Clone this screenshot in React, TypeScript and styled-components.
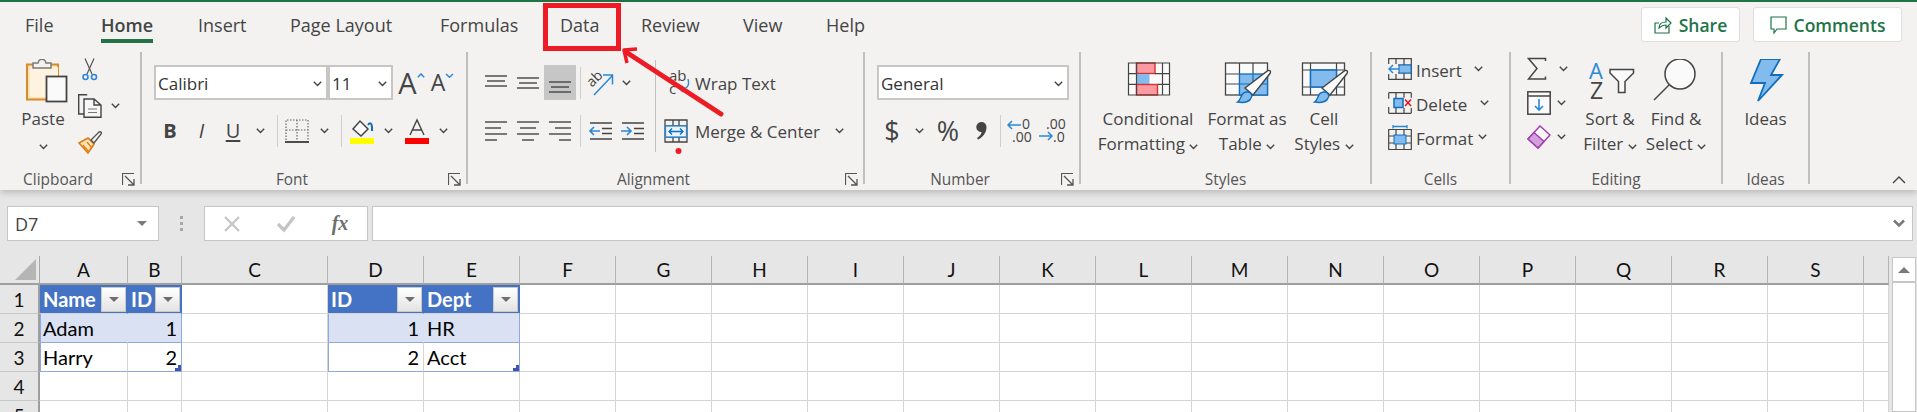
import React from 'react'
import styled, { createGlobalStyle } from 'styled-components'

const Global = createGlobalStyle`
html, body { margin: 0; padding: 0; background: #e6e6e6; overflow: hidden; }
* { box-sizing: border-box; }
`

const UI = `"Open Sans", "Noto Sans", sans-serif`
const INK = '#444444'
const BLUE = '#2b88d8'
const DARK_BLUE = '#106ebe'
const SOFT_BLUE = '#83bbec'

const Page = styled.div`
position: relative;
width: 1917px;
height: 412px;
overflow: hidden;
background: #e6e6e6;
display: flex;
flex-direction: column;
font-family: ${UI};
color: #444;
`
const Head = styled.div`
background: #f3f2f1;
border-top: 2px solid #217346;
box-shadow: 0 2px 7px rgba(0, 0, 0, 0.22);
position: relative;
`
const TabRow = styled.div`
height: 50px;
display: flex;
padding-left: 25px;
`
const Tab = styled.div<{ $w: number }>`
width: ${({ $w }) => $w}px;
padding-top: 12px;
`
const TabLabel = styled.span<{ $active?: boolean }>`
display: inline-block;
font-size: 18px;
line-height: 22px;
height: 29px;
color: #444;
font-weight: ${({ $active }) => ($active ? 600 : 400)};
border-bottom: ${({ $active }) => ($active ? '4px solid #217346' : '0')};
padding-bottom: 3px;
`
const HeadActions = styled.div`
margin-left: auto;
display: flex;
gap: 13px;
padding: 5px 15px 0 0;
`
const ActionButton = styled.div<{ $w: number }>`
width: ${({ $w }) => $w}px;
height: 35px;
background: #fff;
border: 1px solid #e1dfdd;
border-radius: 3px;
display: flex;
align-items: center;
justify-content: center;
gap: 7px;
color: #217346;
font-weight: 600;
font-size: 17.5px;
`
const Ribbon = styled.div`
height: 138px;
display: flex;
`
const Group = styled.section<{ $w: number }>`
width: ${({ $w }) => $w}px;
height: 132px;
border-right: 2px solid #c0bfbe;
display: flex;
flex-direction: column;
`
const GroupBody = styled.div<{ $pad?: number }>`
flex: 1;
min-height: 0;
display: flex;
padding-left: ${({ $pad }) => $pad ?? 0}px;
`
const GroupFoot = styled.div`
height: 22px;
margin-bottom: -6px;
display: flex;
align-items: center;
`
const GroupLabel = styled.div`
flex: 1;
text-align: center;
font-size: 15.400px;
color: #555;
`
const Launcher = styled.div`
width: 24px;
display: flex;
justify-content: center;
`
const Stack = styled.div`
display: flex;
flex-direction: column;
padding-top: 13px;
gap: 13px;
`
const ToolRow = styled.div`
height: 35px;
display: flex;
align-items: center;
`
const Slot = styled.div<{ $w: number; $active?: boolean }>`
width: ${({ $w }) => $w}px;
height: 35px;
flex: none;
display: flex;
align-items: center;
justify-content: center;
background: ${({ $active }) => ($active ? '#c6c6c6' : 'transparent')};
color: #444;
`
const Rule = styled.div<{ $mx: number }>`
width: 1px;
height: 32px;
flex: none;
margin: 0 ${({ $mx }) => $mx}px;
background: #cfcecd;
`
const TallRule = styled.div`
width: 1px;
height: 92px;
margin-top: 8px;
flex: none;
background: #c0bfbe;
`
const Combo = styled.div<{ $w: number }>`
width: ${({ $w }) => $w}px;
height: 35px;
background: #fff;
border: 2px solid #c8c6c4;
display: flex;
align-items: center;
justify-content: space-between;
padding: 2px 4px 0 2px;
font-size: 17px;
color: #333;
`
const BoldMark = styled.span`
font-weight: 700;
font-size: 20px;
`
const ItalicMark = styled.span`
font-style: italic;
font-size: 20px;
`
const UnderMark = styled.span`
font-size: 20px;
text-decoration: underline;
text-underline-offset: 2px;
`
const SymbolMark = styled.span<{ $size: number }>`
font-size: ${({ $size }) => $size}px;
line-height: 1;
color: #444;
`
const GrowMark = styled.span<{ $size: number }>`
font-size: ${({ $size }) => $size}px;
line-height: 1;
color: #444;
`
const LineButton = styled.div`
display: flex;
align-items: center;
height: 35px;
`
const LineIcon = styled.div<{ $w: number; $pr: number }>`
width: ${({ $w }) => $w}px;
padding-right: ${({ $pr }) => $pr}px;
flex: none;
display: flex;
justify-content: flex-end;
`
const LineText = styled.div<{ $w?: number; $ml?: number }>`
width: ${({ $w }) => ($w ? `${$w}px` : 'auto')};
margin-left: ${({ $ml }) => $ml ?? 0}px;
padding-top: 2px;
flex: none;
font-size: 17px;
color: #444;
white-space: nowrap;
`
const BigButton = styled.div<{ $w: number }>`
width: ${({ $w }) => $w}px;
flex: none;
padding-top: 7px;
display: flex;
flex-direction: column;
align-items: center;
`
const BigText = styled.div`
font-size: 17px;
line-height: 24.500px;
height: 24.500px;
white-space: nowrap;
color: #444;
`
const ToolColumn = styled.div<{ $top: number; $gap: number; $ml?: number; $w?: number }>`
display: flex;
flex-direction: column;
padding-top: ${({ $top }) => $top}px;
gap: ${({ $gap }) => $gap}px;
margin-left: ${({ $ml }) => $ml ?? 0}px;
width: ${({ $w }) => ($w ? `${$w}px` : 'auto')};
flex: none;
`
const ToolLine = styled.div<{ $h: number }>`
height: ${({ $h }) => $h}px;
display: flex;
align-items: center;
`
const ChevGap = styled.span<{ $ml: number }>`
display: inline-flex;
margin-left: ${({ $ml }) => $ml}px;
`
const Collapse = styled.div`
position: absolute;
right: 11px;
bottom: 6px;
display: flex;
`
const FormulaRow = styled.div`
height: 66px;
padding: 16px 4px 0 7px;
display: flex;
flex: none;
`
const NameBox = styled.div`
width: 152px;
height: 35px;
background: #fff;
border: 1px solid #c6c6c6;
display: flex;
align-items: center;
justify-content: space-between;
padding: 0 11px 0 7px;
font-size: 18px;
color: #444;
`
const GripDots = styled.div`
width: 45px;
display: flex;
flex-direction: column;
align-items: center;
justify-content: center;
height: 35px;
gap: 3px;
i {
  width: 3px;
  height: 3px;
  background: #a6a6a6;
  display: block;
}
`
const FxBox = styled.div`
width: 164px;
height: 35px;
background: #fff;
border: 1px solid #c6c6c6;
display: flex;
align-items: center;
margin-right: 4px;
`
const FxSlot = styled.div`
width: 54px;
display: flex;
justify-content: center;
`
const FxMark = styled.span`
font-family: "Liberation Serif", serif;
font-style: italic;
font-weight: 700;
font-size: 20px;
color: #6e6e6e;
`
const FormulaInput = styled.div`
flex: 1;
height: 35px;
background: #fff;
border: 1px solid #c6c6c6;
display: flex;
align-items: center;
justify-content: flex-end;
padding-right: 7px;
`
const SheetRow = styled.div`
display: flex;
flex: 1;
min-height: 0;
`
const Grid = styled.div`
width: 1889px;
height: 175px;
display: grid;
grid-template-columns: 40px 88px 54px 146px 96px 96px repeat(14, 96px) 25px;
grid-template-rows: 29px repeat(5, 29px);
font-family: Lato, "Open Sans", sans-serif;
font-size: 20px;
color: #111;
background: #fff;
border-right: 1px solid #9a9a9a;
`
const Corner = styled.div`
background: #e6e6e6;
border-right: 1px solid #a8a8a8;
border-bottom: 2px solid #9f9f9f;
display: flex;
align-items: flex-end;
justify-content: flex-end;
padding: 0 3px 3px 0;
&::after {
  content: '';
  border-style: solid;
  border-width: 0 0 21px 21px;
  border-color: transparent transparent #b5b5b5 transparent;
}
`
const ColHead = styled.div`
background: #e6e6e6;
border-right: 1px solid #b4b4b4;
border-bottom: 2px solid #9f9f9f;
display: flex;
align-items: center;
justify-content: center;
font-size: 19px;
`
const RowHead = styled.div`
background: #e6e6e6;
border-right: 2px solid #9f9f9f;
border-bottom: 1px solid #c8c8c8;
display: flex;
align-items: center;
justify-content: center;
font-size: 19px;
`
type CellKind = 'plain' | 'head' | 'band' | 'last'
const CELL_BG: Record<CellKind, string> = { plain: '#fff', head: '#4472c4', band: '#d9e1f2', last: '#fff' }
const Cell = styled.div<{ $kind: CellKind; $right?: boolean; $edgeL?: boolean; $edgeR?: boolean; $end?: boolean }>`
position: relative;
background: ${({ $kind }) => CELL_BG[$kind]};
color: ${({ $kind }) => ($kind === 'head' ? '#fff' : '#000')};
font-weight: ${({ $kind }) => ($kind === 'head' ? 700 : 400)};
border-bottom: 1px solid ${({ $kind }) => ($kind === 'band' || $kind === 'last' ? '#8ea9db' : '#d4d4d4')};
border-right: 1px solid ${({ $kind, $edgeR }) =>
  $edgeR ? '#8ea9db' : $kind === 'head' ? '#4472c4' : $kind === 'band' ? '#d9e1f2' : '#d4d4d4'};
box-shadow: ${({ $edgeL }) => ($edgeL ? 'inset 1px 0 0 #8ea9db' : 'none')};
display: flex;
align-items: center;
justify-content: ${({ $right }) => ($right ? 'flex-end' : 'space-between')};
padding: 0 ${({ $kind }) => ($kind === 'head' ? 0 : 4)}px 0 3px;
${({ $end }) =>
  $end
    ? `&::after {
  content: '';
  position: absolute;
  right: 0;
  bottom: 0;
  width: 6px;
  height: 6px;
  background: #4054b2;
  clip-path: polygon(100% 0, 100% 100%, 0 100%, 0 50%, 50% 50%, 50% 0);
}`
    : ''}
`
const FilterButton = styled.div`
width: 25px;
height: 25px;
background: linear-gradient(#ffffff, #e3e3e3);
border: 1px solid #c9c9c9;
display: flex;
align-items: center;
justify-content: center;
flex: none;
margin-right: 1px;
&::after {
  content: '';
  border-style: solid;
  border-width: 5px 5px 0 5px;
  border-color: #6e6e6e transparent transparent transparent;
}
`
const TriDown = styled.span`
border-style: solid;
border-width: 5px 5px 0 5px;
border-color: #7a7a7a transparent transparent transparent;
`
const ScrollBar = styled.div`
width: 24px;
margin-left: 3px;
margin-top: 1px;
background: #fff;
border: 1px solid #c6c6c6;
`
const ScrollUp = styled.div`
height: 25px;
border-bottom: 2px solid #c6c6c6;
display: flex;
align-items: center;
justify-content: center;
&::after {
  content: '';
  border-style: solid;
  border-width: 0 6px 6px 6px;
  border-color: transparent transparent #7a7a7a transparent;
}
`
const Annotation = styled.svg`
position: absolute;
left: 0;
top: 0;
pointer-events: none;
`

const Chev = ({ w = 9, c = INK }: { w?: number; c?: string }) => (
  <svg width={w} height={6} viewBox="0 0 9 6" fill="none">
    <path d="M.8.8 4.500 4.500 8.200.8" stroke={c} strokeWidth="1.400" />
  </svg>
)

const LaunchIcon = () => (
  <svg width={13} height={13} viewBox="0 0 13 13" fill="none" stroke="#555">
    <path d="M.5 12V.5H12" strokeWidth="1.200" />
    <path d="M3 3l8.500 8.500M6 12h6V6" strokeWidth="1.300" />
  </svg>
)

const PasteIcon = () => (
  <svg width={50} height={48} viewBox="0 1 50 48">
    <rect x="9" y="6.500" width="31" height="35" fill="#fbe4b8" stroke="#d98a2a" strokeWidth="2" />
    <rect x="12" y="9" width="28" height="30" fill="#fdf3df" />
    <path d="M15 10V5h5c1-5 7-5 8 0h5v5z" fill="#f3f2f1" stroke="#7a7a7a" strokeWidth="1.500" />
    <rect x="28.500" y="18.500" width="20" height="25" fill="#fafafa" stroke="#444" strokeWidth="1.800" />
  </svg>
)
const CutIcon = () => (
  <svg width={24} height={24} viewBox="0 0 24 24" fill="none">
    <path d="M7 .5 14 16M16 .5 9 16" stroke="#555" strokeWidth="1.200" />
    <circle cx="7.500" cy="19" r="2.500" stroke={BLUE} strokeWidth="1.600" />
    <circle cx="16" cy="19" r="2.500" stroke={BLUE} strokeWidth="1.600" />
  </svg>
)
const CopyIcon = () => (
  <svg width={24} height={24} viewBox="0 0 24 24" fill="none" stroke="#444" strokeWidth="1.400">
    <path d="M6 20H.7V.7h8.500" />
    <path d="M6 5h10l7 6v12.300H6zM16 5v6h7" fill="#f7f7f7" />
    <path d="M10 15h9M10 18.500h9" stroke="#777" strokeWidth="1.200" />
  </svg>
)
const PainterIcon = () => (
  <svg width={24} height={24} viewBox="0 0 24 24" fill="none">
    <path d="M1 13 10 8l6 6-6 9z" fill="#fbe4b8" stroke="#e07b12" strokeWidth="1.600" />
    <path d="M5 15l6 7M9 12l5 6" stroke="#e07b12" strokeWidth="1.200" />
    <path d="M13 10 21 2c2-1 3 1 2 2l-7 9z" fill="#f7f7f7" stroke="#555" strokeWidth="1.400" />
  </svg>
)
const BorderIcon = () => (
  <svg width={24} height={24} viewBox="0 0 24 24" fill="none">
    <path d="M1 21V1h22v20M12 1v20M1 11h22" stroke="#666" strokeWidth="1.200" strokeDasharray="1.500 1.500" />
    <path d="M0 23h24" stroke="#222" strokeWidth="1.600" />
  </svg>
)
const FillIcon = () => (
  <svg width={26} height={26} viewBox="0 0 26 26" fill="none">
    <path d="M4 11 11 3l8 8-7 7z" fill="#fafafa" stroke="#444" strokeWidth="1.500" />
    <path d="M19 7c2-3 4-2 4 3v3" stroke={DARK_BLUE} strokeWidth="2" />
    <rect x="1" y="20" width="24" height="6" fill="#ffff00" />
  </svg>
)
const FontColorIcon = () => (
  <svg width={26} height={26} viewBox="0 0 26 26" fill="none">
    <path d="M6 17 13 2l7 15M8.500 12h9" stroke="#444" strokeWidth="1.400" />
    <rect x="1" y="20" width="24" height="6" fill="#ff0000" />
  </svg>
)
const Lines = ({ ys, widths }: { ys: number[]; widths: [number, number][] }) => (
  <svg width={24} height={24} viewBox="0 0 24 24" fill="none" stroke="#444" strokeWidth="1.400">
    {ys.map((y, i) => (
      <path key={y} d={`M${widths[i][0]} ${y}H${widths[i][1]}`} />
    ))}
  </svg>
)
const OrientIcon = () => (
  <svg width={28} height={26} viewBox="0 0 28 26" fill="none" overflow="visible">
    <text x="0" y="14" fontSize="14" fill="#444" fontFamily="Open Sans" transform="rotate(-45 7 10)">ab</text>
    <path d="M7 25 25 6M16 5h9.500v9.500" stroke={BLUE} strokeWidth="1.500" />
  </svg>
)
const IndentIcon = ({ inward }: { inward?: boolean }) => (
  <svg width={24} height={24} viewBox="0 0 24 24" fill="none">
    <path d="M1 4h22M13 9.500h10M13 14.500h10M1 20h22" stroke="#444" strokeWidth="1.300" />
    {inward ? (
      <path d="M0 12h10M6 8l4 4-4 4" stroke={BLUE} strokeWidth="1.600" />
    ) : (
      <path d="M11 12H1M5 8l-4 4 4 4" stroke={BLUE} strokeWidth="1.600" />
    )}
  </svg>
)
const WrapIcon = () => (
  <svg width={24} height={26} viewBox="0 0 24 26" fill="none" overflow="visible">
    <text x="3" y="11" fontSize="15" fill="#444" fontFamily="Open Sans">ab</text>
    <text x="3" y="24" fontSize="15" fill="#444" fontFamily="Open Sans">c</text>
    <path d="M22 9c2 7-1 10-8 10M17 16l-3 3 3 3" stroke={BLUE} strokeWidth="1.400" />
  </svg>
)
const MergeIcon = () => (
  <svg width={24} height={24} viewBox="0 0 24 24" fill="none">
    <path d="M1 1h22v22H1zM1 7h22M1 18h22M9 1v6M15 1v6M9 18v5M15 18v5" stroke="#444" strokeWidth="1.300" />
    <rect x="1.500" y="7" width="21" height="11" fill="#e9f3fb" stroke={BLUE} strokeWidth="1.300" />
    <path d="M5 12.500h14M8 9.500l-3 3 3 3M16 9.500l3 3-3 3" stroke={DARK_BLUE} strokeWidth="1.300" />
  </svg>
)
const CommaIcon = () => (
  <svg width={14} height={20} viewBox="0 0 14 20" fill="#444">
    <path d="M7 1a5 5 0 0 1 5.500 5c0 6-4 10.500-8.500 12.500L3 17c3-2 4.500-4 4.500-6A5 5 0 1 1 7 1z" />
  </svg>
)
const DecimalIcon = ({ more }: { more?: boolean }) => (
  <svg width={26} height={26} viewBox="0 0 26 26" fill="none" overflow="visible">
    <text x={more ? 15 : 7} y="11" fontSize="14" fill="#444" fontFamily="Open Sans">{more ? '0' : '.00'}</text>
    <text x={more ? 5 : 14} y="24" fontSize="14" fill="#444" fontFamily="Open Sans">{more ? '.00' : '.0'}</text>
    {more ? (
      <path d="M14 7H1M5 3 1 7l4 4" stroke={BLUE} strokeWidth="1.500" />
    ) : (
      <path d="M0 18h13M9 14l4 4-4 4" stroke={BLUE} strokeWidth="1.500" />
    )}
  </svg>
)
const ConditionalIcon = () => (
  <svg width={50} height={48} viewBox="1123 59 50 48" fill="none">
    <rect x="1128.500" y="63" width="41" height="32" fill="#fafafa" />
    <rect x="1136.500" y="63" width="18.500" height="10.500" fill="#fb9aa2" stroke="#d9312b" strokeWidth="1.400" />
    <rect x="1136.500" y="74" width="13" height="10" fill={SOFT_BLUE} />
    <rect x="1136.500" y="84.500" width="21" height="10.500" fill="#fb9aa2" stroke="#d9312b" strokeWidth="1.400" />
    <path d="M1128.500 63h41v32h-41zM1128.500 73.700h8M1128.500 84.300h8M1155 73.700h14.500M1158 84.300h11.500M1162.500 63v32M1136.500 63v32" stroke="#444" strokeWidth="1.200" />
  </svg>
)
const Brush = () => (
  <g>
    <path d="M25 30 48 12.500c2.500-.5 3 1 2 3L33 37z" fill="#fafafa" stroke="#444" strokeWidth="1.400" />
    <path d="M32 38 30.500 41c-2 3-7 4-13 3 3-2 3-5 5-8 2-2.500 6-2.500 8-1z" fill={SOFT_BLUE} stroke={DARK_BLUE} strokeWidth="1.400" />
  </g>
)
const TableStyleIcon = () => (
  <svg width={54} height={48} viewBox="0 1 54 48" fill="none">
    <rect x="5.500" y="5" width="42" height="32" fill="#fafafa" stroke="#444" strokeWidth="1.300" />
    <path d="M5.500 16h14M5.500 26h14M19.500 5v32M33 5v11" stroke="#444" strokeWidth="1.200" />
    <rect x="19.500" y="16" width="28" height="21" fill={SOFT_BLUE} stroke={DARK_BLUE} strokeWidth="1.300" />
    <path d="M19.500 26h28M33 16v21" stroke={DARK_BLUE} strokeWidth="1.200" />
    <Brush />
  </svg>
)
const CellStyleIcon = () => (
  <svg width={54} height={48} viewBox="0 1 54 48" fill="none">
    <rect x="5.500" y="5" width="42" height="32" fill="#fafafa" stroke="#444" strokeWidth="1.300" />
    <path d="M13.500 5v32M39.500 5v32M5.500 12h42M5.500 29h42" stroke="#444" strokeWidth="1.200" />
    <rect x="13.500" y="12" width="26" height="17" fill={SOFT_BLUE} stroke={DARK_BLUE} strokeWidth="1.500" />
    <Brush />
  </svg>
)
const InsertIcon = () => (
  <svg width={24} height={22} viewBox="0 0 24 22" fill="none">
    <path d="M.7.7h22.600v20.600H.7zM.7 7h22.600M.7 15h22.600M8 .7v20.600M16 .7v20.600" stroke="#444" strokeWidth="1.200" />
    <rect x="11" y="7" width="12" height="8" fill={SOFT_BLUE} stroke={DARK_BLUE} />
    <rect x="0" y="6" width="10" height="10" fill="#f3f2f1" />
    <path d="M11 11H1M5 7l-4 4 4 4" stroke={BLUE} strokeWidth="1.500" />
  </svg>
)
const DeleteIcon = () => (
  <svg width={24} height={22} viewBox="0 0 24 22" fill="none">
    <path d="M.7.7h22.600M.7 21.300h22.600M.7.7v6M.7 15v6.300M8 .7v20.600M16 .7v5M16 16v5M23.300.7v5M23.300 16v5" stroke="#444" strokeWidth="1.200" />
    <rect x="6" y="6.500" width="9" height="9" fill={SOFT_BLUE} stroke={DARK_BLUE} strokeWidth="1.500" />
    <path d="M17 7.500l6 6.500M23 7.500l-6 6.500" stroke="#e81123" strokeWidth="1.500" />
  </svg>
)
const FormatIcon = () => (
  <svg width={24} height={25} viewBox="0 0 24 25" fill="none">
    <path d="M.7 4.500h22.600v20H.7zM.7 11h22.600M.7 18h22.600M8 4.500v20M16 4.500v20" stroke="#444" strokeWidth="1.200" />
    <rect x="6" y="10" width="12" height="9" fill={SOFT_BLUE} stroke={DARK_BLUE} />
    <path d="M5 1.500h14M5 0v3.500M19 0v3.500" stroke={BLUE} strokeWidth="1.300" />
  </svg>
)
const SigmaIcon = () => (
  <svg width={20} height={24} viewBox="0 0 20 24" fill="none">
    <path d="M18.500 4V1.500H1.500L10 11.500 1.500 22H18.500V19.500" stroke="#444" strokeWidth="1.500" />
  </svg>
)
const FillDownIcon = () => (
  <svg width={24} height={24} viewBox="0 0 24 24" fill="none">
    <rect x=".8" y=".8" width="22.400" height="22.400" fill="#fafafa" stroke="#444" strokeWidth="1.500" />
    <path d="M1 5h22" stroke="#444" strokeWidth="1.500" />
    <path d="M12 8v11M8 15l4 4 4-4" stroke={BLUE} strokeWidth="1.600" />
  </svg>
)
const EraserIcon = () => (
  <svg width={24} height={24} viewBox="0 0 24 24" fill="none">
    <path d="M1 14 13 1l10 9-12 13z" fill="#fafafa" stroke="#a03fae" strokeWidth="1.500" />
    <path d="M1 14 7 7.500l10 9L11 23z" fill="#d59fdc" stroke="#a03fae" strokeWidth="1.500" />
  </svg>
)
const SortIcon = () => (
  <svg width={50} height={48} viewBox="0 1 50 48" fill="none" overflow="visible">
    <text x="4" y="21" fontSize="22" fill={BLUE} fontFamily="Open Sans">A</text>
    <text x="5" y="41" fontSize="23" fill="#444" fontFamily="Open Sans">Z</text>
    <path d="M25 11.500h23.500v3.500L40 23.500v11h-6.500v-11L25 15z" fill="#fafafa" stroke="#444" strokeWidth="1.500" />
  </svg>
)
const FindIcon = () => (
  <svg width={60} height={48} viewBox="0 1 60 48" fill="none">
    <circle cx="34" cy="16" r="15" fill="#fafafa" stroke="#444" strokeWidth="1.500" />
    <path d="M23 27 8 42" stroke="#444" strokeWidth="1.500" />
  </svg>
)
const BoltIcon = () => (
  <svg width={40} height={48} viewBox="0 1 40 48" fill="none">
    <path d="M15 1h19L25 17h11L12 43l7-18H5z" fill={SOFT_BLUE} stroke={DARK_BLUE} strokeWidth="1.800" />
  </svg>
)
const ShareIcon = () => (
  <svg width={18} height={18} viewBox="0 0 18 18" fill="none" stroke="#217346" strokeWidth="1.200">
    <path d="M15 10v7H1V7h4" />
    <path d="M5 12c0-4 3-6 7-6V2l5 5-5 5V9c-3 0-5 1-7 3z" />
  </svg>
)
const CommentIcon = () => (
  <svg width={17} height={18} viewBox="0 0 17 18" fill="none" stroke="#217346" strokeWidth="1.200">
    <path d="M1 1h15v12H7l-3 4v-4H1z" />
  </svg>
)
const CrossIcon = () => (
  <svg width={18} height={18} viewBox="0 0 18 18" fill="none" stroke="#c4c4c4" strokeWidth="2.200">
    <path d="M2 2l14 14M16 2 2 16" />
  </svg>
)
const CheckIcon = () => (
  <svg width={20} height={18} viewBox="0 0 20 18" fill="none" stroke="#c4c4c4" strokeWidth="3.200">
    <path d="M2 9l6 6L18 2" />
  </svg>
)
const WideChev = () => (
  <svg width={12} height={9} viewBox="0 0 12 9" fill="none" stroke="#7a7a7a" strokeWidth="2.600">
    <path d="M1 1.500 6 6.500 11 1.500" />
  </svg>
)

const TABS: [string, number][] = [
  ['File', 76], ['Home', 97], ['Insert', 92], ['Page Layout', 150], ['Formulas', 120],
  ['Data', 81], ['Review', 102], ['View', 83], ['Help', 60],
]
const COLUMNS = 'ABCDEFGHIJKLMNOPQRS'.split('').concat('')

type CellData = { text: string; kind: CellKind; right?: boolean; edgeL?: boolean; edgeR?: boolean; end?: boolean; filter?: boolean }
const TABLE: Record<string, CellData> = {
  A1: { text: 'Name', kind: 'head', filter: true },
  B1: { text: 'ID', kind: 'head', filter: true },
  D1: { text: 'ID', kind: 'head', filter: true },
  E1: { text: 'Dept', kind: 'head', filter: true },
  A2: { text: 'Adam', kind: 'band', edgeL: true },
  B2: { text: '1', kind: 'band', right: true, edgeR: true },
  D2: { text: '1', kind: 'band', right: true, edgeL: true },
  E2: { text: 'HR', kind: 'band', edgeR: true },
  A3: { text: 'Harry', kind: 'last', edgeL: true },
  B3: { text: '2', kind: 'last', right: true, edgeR: true, end: true },
  D3: { text: '2', kind: 'last', right: true, edgeL: true },
  E3: { text: 'Acct', kind: 'last', edgeR: true, end: true },
}

const Sheet = () => (
  <Grid>
    <Corner />
    {COLUMNS.map((c, i) => (
      <ColHead key={i}>{c}</ColHead>
    ))}
    {[1, 2, 3, 4, 5].map((row) => (
      <React.Fragment key={row}>
        <RowHead>{row}</RowHead>
        {COLUMNS.map((c, i) => {
          const d = TABLE[`${c}${row}`]
          return (
            <Cell
              key={i}
              $kind={d ? d.kind : 'plain'}
              $right={d?.right}
              $edgeL={d?.edgeL}
              $edgeR={d?.edgeR}
              $end={d?.end}
            >
              {d?.text}
              {d?.filter && <FilterButton />}
            </Cell>
          )
        })}
      </React.Fragment>
    ))}
  </Grid>
)

const App = () => {
  return (
    <Page>
      <Global />
      <Head>
        <TabRow>
          {TABS.map(([name, w]) => (
            <Tab key={name} $w={w}>
              <TabLabel $active={name === 'Home'}>{name}</TabLabel>
            </Tab>
          ))}
          <HeadActions>
            <ActionButton $w={99}><ShareIcon />Share</ActionButton>
            <ActionButton $w={149}><CommentIcon />Comments</ActionButton>
          </HeadActions>
        </TabRow>
        <Ribbon>
          <Group $w={142}>
            <GroupBody $pad={20}>
              <BigButton $w={46}>
                <PasteIcon />
                <BigText>Paste</BigText>
                <BigText><Chev /></BigText>
              </BigButton>
              <ToolColumn $top={6} $gap={12} $ml={12}>
                <ToolLine $h={24}><CutIcon /></ToolLine>
                <ToolLine $h={24}><CopyIcon /><ChevGap $ml={9}><Chev /></ChevGap></ToolLine>
                <ToolLine $h={24}><PainterIcon /></ToolLine>
              </ToolColumn>
            </GroupBody>
            <GroupFoot><GroupLabel>Clipboard</GroupLabel><Launcher><LaunchIcon /></Launcher></GroupFoot>
          </Group>

          <Group $w={326}>
            <GroupBody $pad={12}>
              <Stack>
                <ToolRow>
                  <Combo $w={174}>Calibri<Chev /></Combo>
                  <Combo $w={65}>11<Chev /></Combo>
                  <Slot $w={37}>
                    <GrowMark $size={29}>A</GrowMark>
                    <svg width={8} height={5} viewBox="0 0 8 5" fill="none" style={{ marginBottom: 14 }}><path d="M.8 4.200 4 1l3.200 3.200" stroke={BLUE} strokeWidth="1.500" /></svg>
                  </Slot>
                  <Slot $w={25}>
                    <GrowMark $size={23}>A</GrowMark>
                    <svg width={9} height={5} viewBox="0 0 9 5" fill="none" style={{ marginBottom: 14 }}><path d="M1 1l3.500 3.200L8 1" stroke={BLUE} strokeWidth="1.500" /></svg>
                  </Slot>
                </ToolRow>
                <ToolRow>
                  <Slot $w={32}><BoldMark>B</BoldMark></Slot>
                  <Slot $w={31}><ItalicMark>I</ItalicMark></Slot>
                  <Slot $w={32}><UnderMark>U</UnderMark></Slot>
                  <Slot $w={23}><Chev /></Slot>
                  <Rule $mx={5} />
                  <Slot $w={28}><BorderIcon /></Slot>
                  <Slot $w={26}><Chev /></Slot>
                  <Rule $mx={4} />
                  <Slot $w={32}><FillIcon /></Slot>
                  <Slot $w={20}><Chev /></Slot>
                  <Slot $w={38}><FontColorIcon /></Slot>
                  <Slot $w={14}><Chev /></Slot>
                </ToolRow>
              </Stack>
            </GroupBody>
            <GroupFoot><GroupLabel>Font</GroupLabel><Launcher><LaunchIcon /></Launcher></GroupFoot>
          </Group>

          <Group $w={397}>
            <GroupBody $pad={12}>
              <Stack>
                <ToolRow>
                  <Slot $w={32}><Lines ys={[5, 10, 15]} widths={[[1, 23], [3, 21], [1, 23]]} /></Slot>
                  <Slot $w={32}><Lines ys={[7, 12, 17]} widths={[[1, 23], [3, 21], [1, 23]]} /></Slot>
                  <Slot $w={32} $active><Lines ys={[11, 16, 21]} widths={[[1, 23], [3, 21], [1, 23]]} /></Slot>
                  <Rule $mx={4} />
                  <Slot $w={32}><OrientIcon /></Slot>
                  <Slot $w={18}><Chev /></Slot>
                </ToolRow>
                <ToolRow>
                  <Slot $w={32}><Lines ys={[3, 9, 15, 21]} widths={[[1, 23], [1, 17], [1, 23], [1, 13]]} /></Slot>
                  <Slot $w={32}><Lines ys={[3, 9, 15, 21]} widths={[[1, 23], [4, 20], [1, 23], [6, 18]]} /></Slot>
                  <Slot $w={32}><Lines ys={[3, 9, 15, 21]} widths={[[1, 23], [7, 23], [1, 23], [11, 23]]} /></Slot>
                  <Rule $mx={4} />
                  <Slot $w={32}><IndentIcon /></Slot>
                  <Slot $w={32}><IndentIcon inward /></Slot>
                </ToolRow>
              </Stack>
              <ChevGap $ml={6}><TallRule /></ChevGap>
              <Stack>
                <LineButton><LineIcon $w={39} $pr={5}><WrapIcon /></LineIcon><LineText>Wrap Text</LineText></LineButton>
                <LineButton>
                  <LineIcon $w={39} $pr={7}><MergeIcon /></LineIcon>
                  <LineText $w={140}>Merge &amp; Center</LineText>
                  <Chev />
                </LineButton>
              </Stack>
            </GroupBody>
            <GroupFoot><GroupLabel>Alignment</GroupLabel><Launcher><LaunchIcon /></Launcher></GroupFoot>
          </Group>

          <Group $w={216}>
            <GroupBody $pad={12}>
              <Stack>
                <ToolRow><Combo $w={192}>General<Chev /></Combo></ToolRow>
                <ToolRow>
                  <Slot $w={30}><SymbolMark $size={27}>$</SymbolMark></Slot>
                  <Slot $w={24}><Chev /></Slot>
                  <Slot $w={34}><SymbolMark $size={27}>%</SymbolMark></Slot>
                  <Slot $w={32}><CommaIcon /></Slot>
                  <Rule $mx={3} />
                  <Slot $w={32}><DecimalIcon more /></Slot>
                  <Slot $w={32}><DecimalIcon /></Slot>
                </ToolRow>
              </Stack>
            </GroupBody>
            <GroupFoot><GroupLabel>Number</GroupLabel><Launcher><LaunchIcon /></Launcher></GroupFoot>
          </Group>

          <Group $w={291}>
            <GroupBody $pad={4}>
              <BigButton $w={126}>
                <ConditionalIcon />
                <BigText>Conditional</BigText>
                <BigText>Formatting <Chev /></BigText>
              </BigButton>
              <BigButton $w={72}>
                <TableStyleIcon />
                <BigText>Format as</BigText>
                <BigText>Table <Chev /></BigText>
              </BigButton>
              <BigButton $w={82}>
                <CellStyleIcon />
                <BigText>Cell</BigText>
                <BigText>Styles <Chev /></BigText>
              </BigButton>
            </GroupBody>
            <GroupFoot><GroupLabel>Styles</GroupLabel></GroupFoot>
          </Group>

          <Group $w={139}>
            <GroupBody $pad={16}>
              <ToolColumn $top={0} $gap={0}>
                <ToolLine $h={34}><InsertIcon /><LineText $w={58} $ml={4}>Insert</LineText><Chev /></ToolLine>
                <ToolLine $h={34}><DeleteIcon /><LineText $w={64} $ml={4}>Delete</LineText><Chev /></ToolLine>
                <ToolLine $h={34}><FormatIcon /><LineText $w={62} $ml={4}>Format</LineText><Chev /></ToolLine>
              </ToolColumn>
            </GroupBody>
            <GroupFoot><GroupLabel>Cells</GroupLabel></GroupFoot>
          </Group>

          <Group $w={212}>
            <GroupBody $pad={16}>
              <ToolColumn $top={0} $gap={0} $w={45}>
                <ToolLine $h={34}><SigmaIcon /><ChevGap $ml={12}><Chev /></ChevGap></ToolLine>
                <ToolLine $h={34}><FillDownIcon /><ChevGap $ml={6}><Chev /></ChevGap></ToolLine>
                <ToolLine $h={34}><EraserIcon /><ChevGap $ml={6}><Chev /></ChevGap></ToolLine>
              </ToolColumn>
              <BigButton $w={76}>
                <SortIcon />
                <BigText>Sort &amp;</BigText>
                <BigText>Filter <Chev /></BigText>
              </BigButton>
              <BigButton $w={56}>
                <FindIcon />
                <BigText>Find &amp;</BigText>
                <BigText>Select <Chev /></BigText>
              </BigButton>
            </GroupBody>
            <GroupFoot><GroupLabel>Editing</GroupLabel></GroupFoot>
          </Group>

          <Group $w={87}>
            <GroupBody>
              <BigButton $w={85}>
                <BoltIcon />
                <BigText>Ideas</BigText>
              </BigButton>
            </GroupBody>
            <GroupFoot><GroupLabel>Ideas</GroupLabel></GroupFoot>
          </Group>
        </Ribbon>
        <Collapse>
          <svg width={14} height={8} viewBox="0 0 14 8" fill="none" stroke="#444" strokeWidth="1.400"><path d="M1 7l6-6 6 6" /></svg>
        </Collapse>
      </Head>

      <FormulaRow>
        <NameBox>D7<TriDown /></NameBox>
        <GripDots><i /><i /><i /></GripDots>
        <FxBox>
          <FxSlot><CrossIcon /></FxSlot>
          <FxSlot><CheckIcon /></FxSlot>
          <FxSlot><FxMark>fx</FxMark></FxSlot>
        </FxBox>
        <FormulaInput><WideChev /></FormulaInput>
      </FormulaRow>

      <SheetRow>
        <Sheet />
        <ScrollBar><ScrollUp /></ScrollBar>
      </SheetRow>

      <Annotation width={1917} height={412} viewBox="0 0 1917 412" fill="none">
        <rect x="545.500" y="5.500" width="73" height="43" stroke="#ed1c24" strokeWidth="5" />
        <path d="M721 114 626 52" stroke="#ed1c24" strokeWidth="5" strokeLinecap="round" />
        <path d="M637 49 624 50 627 63" stroke="#ed1c24" strokeWidth="3.500" strokeLinejoin="round" />
        <circle cx="678.500" cy="151" r="3" fill="#ed1c24" />
      </Annotation>
    </Page>
  )
}

export default App
